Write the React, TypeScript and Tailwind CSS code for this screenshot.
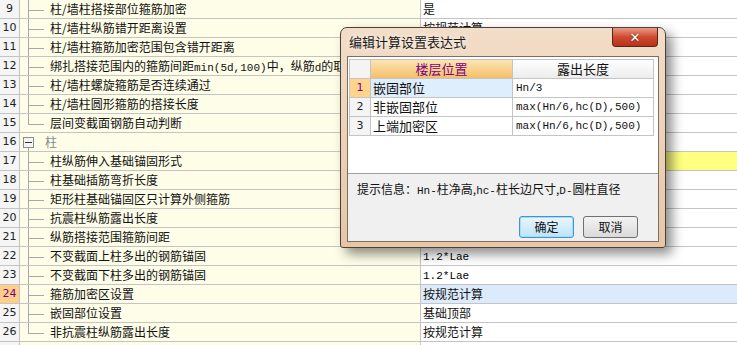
import type { ReactNode } from 'react';

type Row = {
  n?: number;
  name: ReactNode;
  value?: string;
  kind: 'child' | 'last' | 'group' | 'none';
  mono?: boolean;
  valueBg?: string;
  active?: boolean;
};

const cjk = "font-['Noto_Sans_CJK_SC','Noto_Sans',sans-serif]";
const mono = "font-['Liberation_Mono','DejaVu_Sans_Mono',monospace]";

const rows: Row[] = [
  { n: 9, name: '柱/墙柱搭接部位箍筋加密', value: '是', kind: 'child' },
  { n: 10, name: '柱/墙柱纵筋错开距离设置', value: '按规范计算', kind: 'child' },
  { n: 11, name: '柱/墙柱箍筋加密范围包含错开距离', kind: 'child' },
  {
    n: 12,
    name: (
      <>
        绑扎搭接范围内的箍筋间距<span className={`${mono} text-[11px]`}>min(5d,100)</span>中，纵筋<span className={`${mono} text-[11px]`}>d</span>的取值
      </>
    ),
    kind: 'child',
  },
  { n: 13, name: '柱/墙柱螺旋箍筋是否连续通过', kind: 'child' },
  { n: 14, name: '柱/墙柱圆形箍筋的搭接长度', kind: 'child' },
  { n: 15, name: '层间变截面钢筋自动判断', kind: 'last' },
  { n: 16, name: '柱', kind: 'group' },
  { n: 17, name: '柱纵筋伸入基础锚固形式', kind: 'child', valueBg: 'bg-[#ffff80]' },
  { n: 18, name: '柱基础插筋弯折长度', kind: 'child' },
  { n: 19, name: '矩形柱基础锚固区只计算外侧箍筋', kind: 'child' },
  { n: 20, name: '抗震柱纵筋露出长度', kind: 'child' },
  { n: 21, name: '纵筋搭接范围箍筋间距', kind: 'child' },
  { n: 22, name: '不变截面上柱多出的钢筋锚固', value: '1.2*Lae', kind: 'child', mono: true },
  { n: 23, name: '不变截面下柱多出的钢筋锚固', value: '1.2*Lae', kind: 'child', mono: true },
  { n: 24, name: '箍筋加密区设置', value: '按规范计算', kind: 'child', valueBg: 'bg-[#dcebfb]', active: true },
  { n: 25, name: '嵌固部位设置', value: '基础顶部', kind: 'child' },
  { n: 26, name: '非抗震柱纵筋露出长度', value: '按规范计算', kind: 'last' },
  { name: '', kind: 'none' },
];

function TreeMark({ kind }: { kind: Row['kind'] }) {
  if (kind === 'none') return <div className="w-[30px] shrink-0" />;
  if (kind === 'group') {
    return (
      <div className="relative w-[30px] h-full shrink-0">
        <div className="absolute left-[8px] top-[10px] bottom-0 w-px bg-[#a8a8a8]" />
        <div className="absolute left-[3px] top-[4px] w-[11px] h-[11px] border border-[#8c8c8c] bg-[#f4f4f4] flex items-center justify-center">
          <div className="w-[7px] h-px bg-[#333]" />
        </div>
      </div>
    );
  }
  return (
    <div className="relative w-[30px] h-full shrink-0">
      <div className={`absolute left-[8px] top-0 w-px bg-[#a8a8a8] ${kind === 'last' ? 'h-[10px]' : 'h-full'}`} />
      <div className="absolute left-[8px] top-[10px] w-[16px] h-px bg-[#a8a8a8]" />
    </div>
  );
}

function GridRow({ row }: { row: Row }) {
  return (
    <div className="flex h-[19px] shrink-0 border-b border-[#c4c4c4] text-[12px] leading-[18px]">
      <div
        className={`w-[20px] shrink-0 border-r border-[#c4c4c4] text-center font-['DejaVu_Sans',sans-serif] text-[11px] ${
          row.active ? 'bg-[#ffcf8a] text-[#800080]' : 'bg-[#f5f5f5] text-[#222]'
        }`}
      >
        {row.n}
      </div>
      <div className="w-[401px] shrink-0 border-r border-[#c4c4c4] bg-[#fdfde8] flex overflow-hidden whitespace-nowrap">
        <TreeMark kind={row.kind} />
        <span className={`${cjk} ${row.kind === 'group' ? 'text-[#8a8a8a] -ml-[5px]' : 'text-[#111]'}`}>{row.name}</span>
      </div>
      <div className={`flex-1 pl-[2px] whitespace-nowrap overflow-hidden ${row.valueBg ?? 'bg-white'}`}>
        {row.value && (
          <span className={row.mono ? `${mono} text-[11px]` : `${cjk} text-[#111]`}>{row.value}</span>
        )}
      </div>
    </div>
  );
}

const dialogRows = [
  { n: 1, pos: '嵌固部位', len: 'Hn/3' },
  { n: 2, pos: '非嵌固部位', len: 'max(Hn/6,hc(D),500)' },
  { n: 3, pos: '上端加密区', len: 'max(Hn/6,hc(D),500)' },
];

function Dialog() {
  return (
    <div className="absolute left-[340px] top-[27px] w-[326px] h-[221px] rounded-t-[7px] rounded-b-[3px] border border-[#4e4036] bg-gradient-to-b from-[#f2ddc8] to-[#e7c6a6] shadow-[6px_6px_12px_rgba(0,0,0,0.45)] flex flex-col px-[6px] pb-[5px]">
      <div className="h-[28px] flex items-start justify-between shrink-0">
        <span className={`${cjk} text-[13px] leading-[16px] text-[#1a1a1a] mt-[6px] ml-[2px] [text-shadow:0_0_6px_#fff]`}>编辑计算设置表达式</span>
        <div className="mr-[1px] w-[46px] h-[19px] rounded-b-[4px] border border-[#5a2418] border-t-0 bg-gradient-to-b from-[#e79a86] via-[#cf4a30] to-[#b8321c] flex items-center justify-center">
          <span className="text-white font-bold text-[13px] leading-none font-['DejaVu_Sans',sans-serif] [text-shadow:0_0_2px_#5a2418]">✕</span>
        </div>
      </div>
      <div className="flex-1 border border-[#7d6e62] bg-[#f0f0f0] flex flex-col">
        <div className="h-[117px] bg-white border-b border-[#a0a0a0] pt-[2px] pl-[1px] shrink-0">
          <div className="w-[305px] border-l border-t border-[#c4c4c4]">
            <div className="flex h-[19px] border-b border-[#c4c4c4] text-[13px] leading-[18px]">
              <div className="w-[21px] border-r border-[#c4c4c4] bg-[#f4f4f4]" />
              <div className={`w-[142px] border-r border-[#c4c4c4] bg-gradient-to-b from-[#fde4b4] to-[#f4c068] text-center text-[#800080] ${cjk}`}>楼层位置</div>
              <div className={`flex-1 border-r border-[#c4c4c4] bg-gradient-to-b from-white to-[#ececec] text-center text-[#111] ${cjk}`}>露出长度</div>
            </div>
            {dialogRows.map((r) => (
              <div key={r.n} className="flex h-[19px] border-b border-[#c4c4c4] text-[13px] leading-[18px]">
                <div
                  className={`w-[21px] border-r border-[#c4c4c4] text-center text-[11px] font-['DejaVu_Sans',sans-serif] ${
                    r.n === 1 ? 'bg-[#ffd58e] text-[#800080]' : 'bg-[#f4f4f4] text-[#222]'
                  }`}
                >
                  {r.n}
                </div>
                <div className={`w-[142px] border-r border-[#c4c4c4] pl-[2px] ${cjk} text-[#111] ${r.n === 1 ? 'bg-[#dfeefc]' : ''}`}>{r.pos}</div>
                <div className={`flex-1 border-r border-[#c4c4c4] pl-[3px] ${mono} text-[11px] text-[#111]`}>{r.len}</div>
              </div>
            ))}
          </div>
        </div>
        <div className={`${cjk} text-[12px] text-[#111] mt-[6px] ml-[9px]`}>
          提示信息：<span className={`${mono} text-[11px]`}>Hn-</span>柱净高,<span className={`${mono} text-[11px]`}>hc-</span>柱长边尺寸,<span className={`${mono} text-[11px]`}>D-</span>圆柱直径
        </div>
        <div className="flex justify-end gap-[9px] mt-auto mb-[3px] mr-[20px]">
          <button className={`w-[55px] h-[22px] rounded-[3px] border border-[#3c95d6] bg-gradient-to-b from-[#eaf6fd] to-[#bee3f8] ${cjk} text-[12px] text-[#111] shadow-[inset_0_0_0_1px_#a8dcf8]`}>确定</button>
          <button className={`w-[55px] h-[22px] rounded-[3px] border border-[#707070] bg-gradient-to-b from-[#f3f3f3] to-[#dadada] ${cjk} text-[12px] text-[#111]`}>取消</button>
        </div>
      </div>
    </div>
  );
}

export default function App() {
  return (
    <div className="relative w-[737px] h-[345px] overflow-hidden bg-white">
      <div className="flex flex-col">
        {rows.map((r, i) => (
          <GridRow key={i} row={r} />
        ))}
      </div>
      <Dialog />
    </div>
  );
}
